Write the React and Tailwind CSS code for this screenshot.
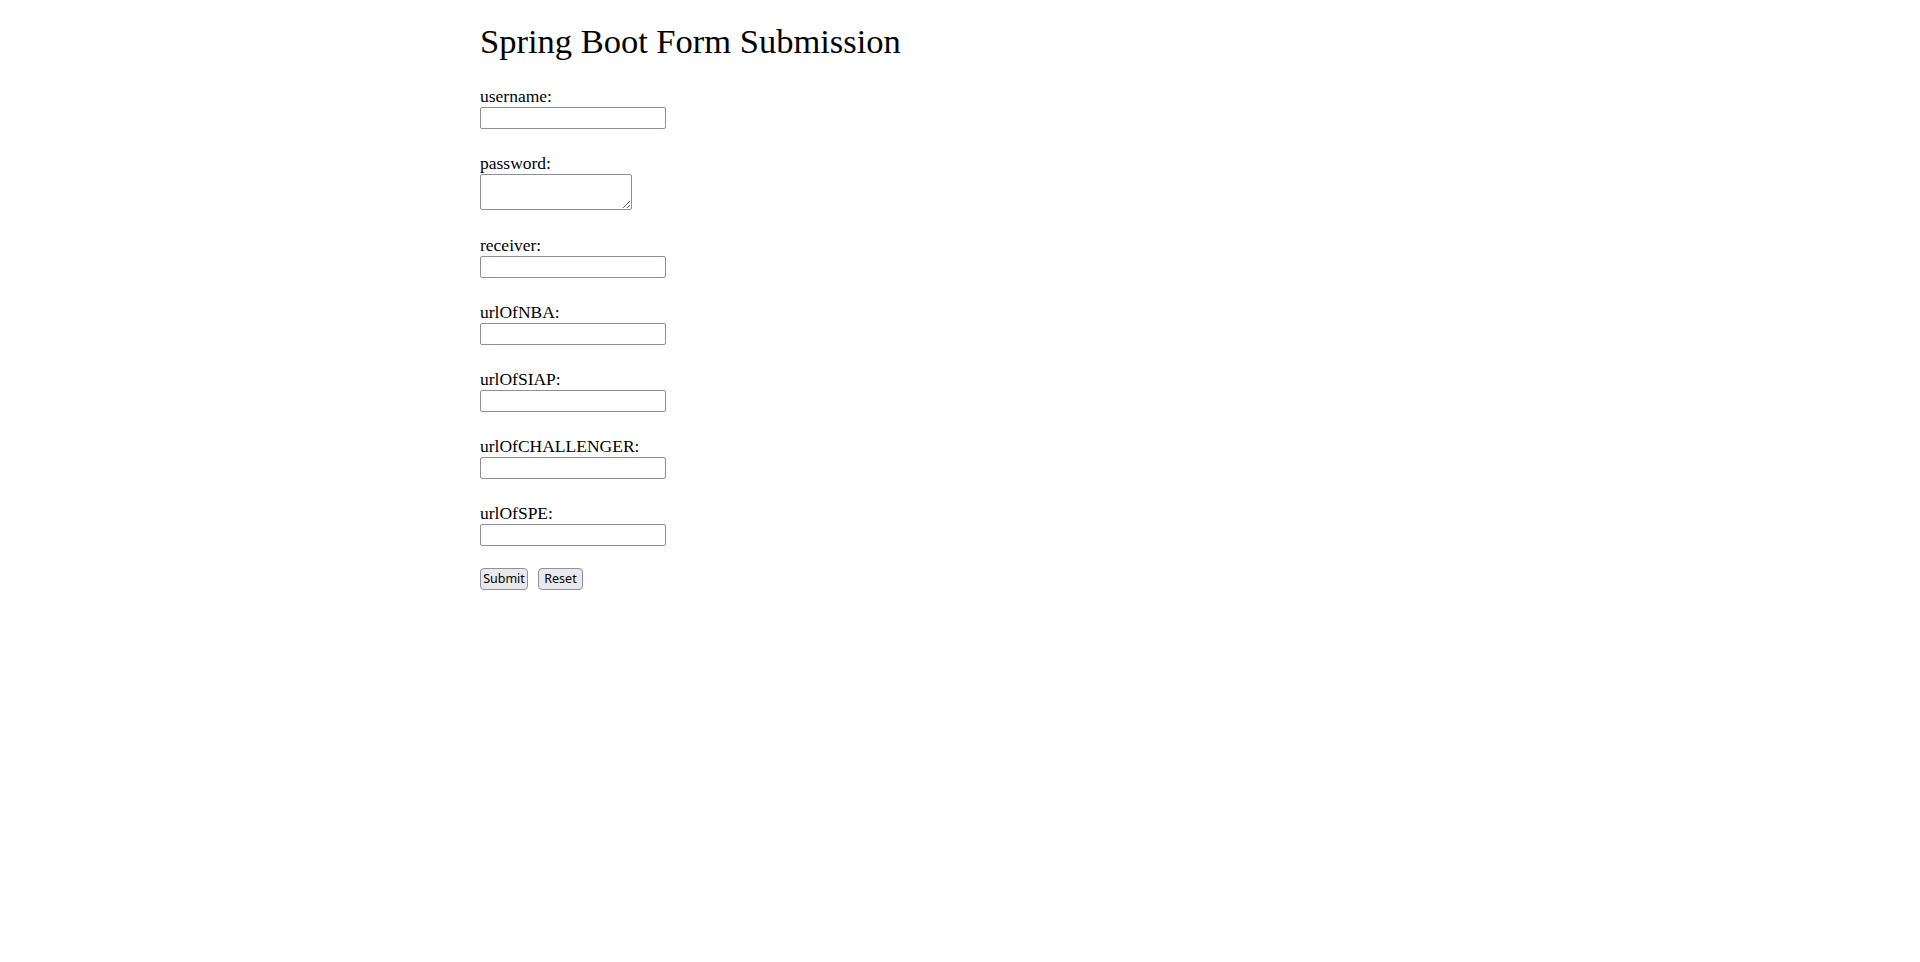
import { useState } from "react";

const fields = [
  { name: "username", type: "input" },
  { name: "password", type: "textarea" },
  { name: "receiver", type: "input" },
  { name: "urlOfNBA", type: "input" },
  { name: "urlOfSIAP", type: "input" },
  { name: "urlOfCHALLENGER", type: "input" },
  { name: "urlOfSPE", type: "input" },
];

export default function App() {
  const empty = Object.fromEntries(fields.map((f) => [f.name, ""]));
  const [values, setValues] = useState(empty);

  const update = (name) => (e) => setValues((v) => ({ ...v, [name]: e.target.value }));

  return (
    <div className="min-h-screen bg-white pl-[480px] pt-[21px] text-black font-['Liberation_Serif',serif]">
      <h1 className="text-[34.5px] leading-[41px] font-normal">Spring Boot Form Submission</h1>

      <form
        className="mt-[21px] flex flex-col gap-[21px]"
        onSubmit={(e) => e.preventDefault()}
        onReset={() => setValues(empty)}
      >
        {fields.map((f) => (
          <div key={f.name} className="flex flex-col items-start">
            <label htmlFor={f.name} className="text-[17.5px] leading-6 pt-px -mb-px">
              {f.name}:
            </label>
            {f.type === "textarea" ? (
              <textarea
                id={f.name}
                name={f.name}
                value={values[f.name]}
                onChange={update(f.name)}
                className="mb-px h-[36px] w-[152px] resize rounded-[2px] border border-[#8f8f9d] bg-white px-1 text-[13px] outline-none"
              />
            ) : (
              <input
                id={f.name}
                name={f.name}
                type="text"
                value={values[f.name]}
                onChange={update(f.name)}
                className="h-[22px] w-[186px] rounded-[2px] border border-[#8f8f9d] bg-white px-1 text-[13px] outline-none"
              />
            )}
          </div>
        ))}

        <div className="mt-[1px] flex gap-[10px] font-['Noto_Sans',sans-serif] text-[12.5px]">
          <button type="submit" className="flex h-[22px] w-[48px] items-center justify-center rounded-[4px] border border-[#8f8f9d] bg-[#e9e9ed] px-0 leading-none">
            Submit
          </button>
          <button type="reset" className="flex h-[22px] w-[45px] items-center justify-center rounded-[4px] border border-[#8f8f9d] bg-[#e9e9ed] px-0 leading-none">
            Reset
          </button>
        </div>
      </form>
    </div>
  );
}
